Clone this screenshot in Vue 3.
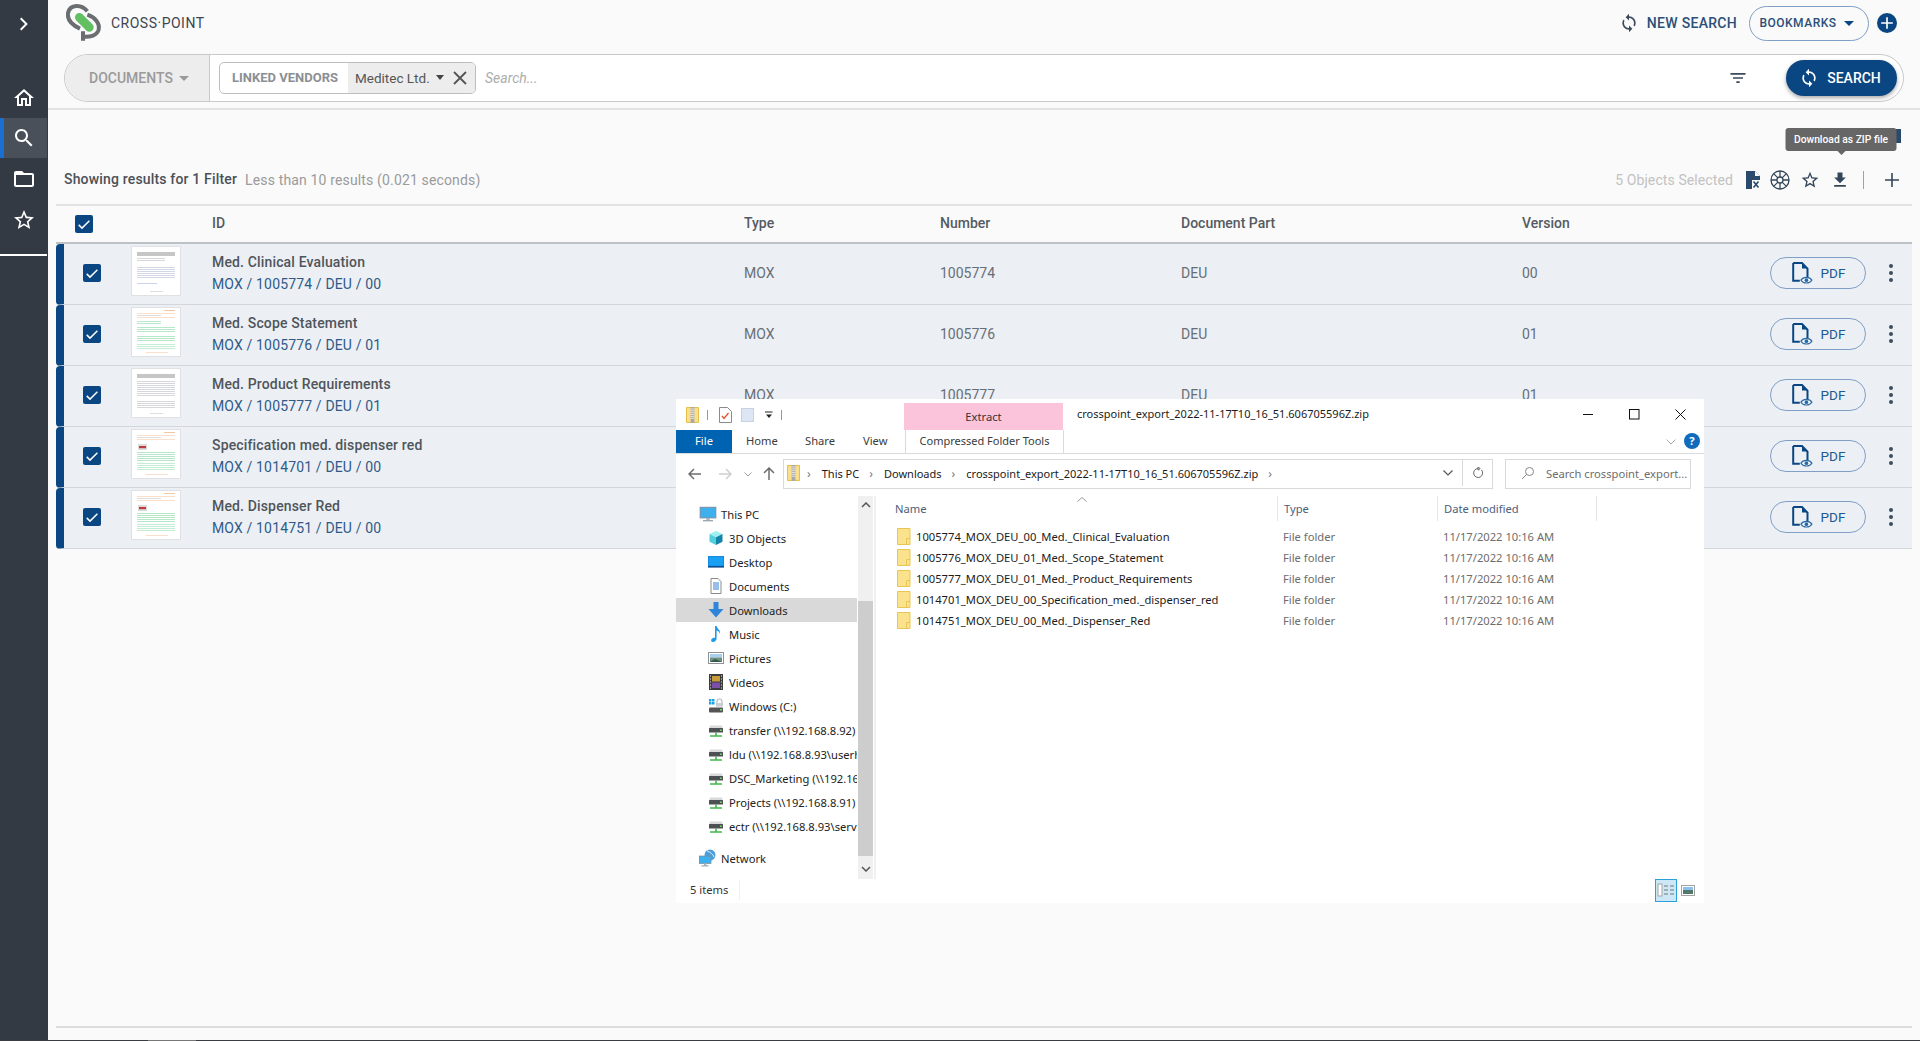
<template>
  <div class="app">
    <!-- shared icons -->
    <svg class="defs">
      <symbol id="i-sync" viewBox="0 0 24 24"><path d="M12 4V1L8 5l4 4V6c3.31 0 6 2.69 6 6 0 1.01-.25 1.97-.7 2.8l1.46 1.46C19.54 15.03 20 13.57 20 12c0-4.42-3.58-8-8-8zm0 14c-3.31 0-6-2.69-6-6 0-1.01.25-1.97.7-2.8L5.24 7.74C4.46 8.97 4 10.43 4 12c0 4.42 3.58 8 8 8v3l4-4-4-4v3z" /></symbol>
      <symbol id="i-check" viewBox="0 0 24 24"><path d="M9 16.6L4.9 12.5l-1.6 1.6L9 19.8 20.9 7.9l-1.6-1.6z" /></symbol>
      <symbol id="i-star" viewBox="0 0 24 24"><path d="M22 9.24l-7.19-.62L12 2 9.19 8.63 2 9.24l5.46 4.73L5.82 21 12 17.27 18.18 21l-1.63-7.03L22 9.24zM12 15.4l-3.76 2.27 1-4.28-3.32-2.88 4.38-.38L12 6.1l1.71 4.04 4.38.38-3.32 2.88 1 4.28L12 15.4z" /></symbol>
      <symbol id="n-pc" viewBox="0 0 16 16"><rect x="1" y="2" width="14" height="9.5" fill="#3fb0ee" stroke="#7d8a94" stroke-width=".8" /><rect x="6.5" y="11.5" width="3" height="2" fill="#aab4bc" /><rect x="3.5" y="13.5" width="9" height="1" fill="#8b969f" /></symbol>
      <symbol id="n-cube" viewBox="0 0 16 16"><path d="M8 1l6.5 3L8 7.2 1.5 4z" fill="#9ff0f2" /><path d="M1.5 4L8 7.2V15l-6.5-3.2z" fill="#4fd0dc" /><path d="M14.5 4L8 7.2V15l6.5-3.2z" fill="#1483a8" /></symbol>
      <symbol id="n-desktop" viewBox="0 0 16 16"><rect x="0" y="2" width="16" height="11" fill="#1787e0" /><rect x="0" y="12" width="16" height="1.6" fill="#0a4f8f" /><rect x="1" y="3" width="14" height="8.6" fill="#18a0f3" /></symbol>
      <symbol id="n-docs" viewBox="0 0 16 16"><path d="M3 .5h7l3 3v12H3z" fill="#fff" stroke="#8a8a8a" /><path d="M5 5h6M5 7h6M5 9h6M5 11h6" stroke="#2f7fcf" /></symbol>
      <symbol id="n-down" viewBox="0 0 16 16"><path d="M5.5 0h5v7h5L8 15.5.5 7h5z" fill="#2f86d9" /></symbol>
      <symbol id="n-music" viewBox="0 0 16 16"><path d="M7 0h1.6c.3 3 4.4 3.4 3.2 8-.4-2-1.6-3-3.2-3.4V12.5C8.6 14.6 6.7 16 5 16c-1.6 0-2.3-1.2-1.7-2.5.7-1.4 2.3-2 3.7-1.7z" fill="#1f9be8" /></symbol>
      <symbol id="n-pics" viewBox="0 0 16 16"><rect x=".5" y="2.5" width="15" height="11" fill="#fff" stroke="#8f9296" /><rect x="2" y="4" width="12" height="3.5" fill="#a9d0ee" /><rect x="2" y="7.5" width="12" height="4.5" fill="#6f8f80" /><path d="M2 12l5-3 7 3z" fill="#2f5a4d" /></symbol>
      <symbol id="n-video" viewBox="0 0 16 16"><rect x="1" y="0" width="14" height="16" fill="#3b3b3b" /><rect x="4" y="2" width="8" height="5.5" fill="#c79a3a" /><rect x="4" y="8.5" width="8" height="5.5" fill="#7c4fa8" /><path d="M2 2h1M2 5h1M2 8h1M2 11h1M2 14h1M13 2h1M13 5h1M13 8h1M13 11h1M13 14h1" stroke="#eee" /></symbol>
      <symbol id="n-cdrive" viewBox="0 0 16 16"><rect x="1" y="9.5" width="14" height="5" rx="1" fill="#555" /><rect x="12" y="11" width="2" height="1.5" fill="#6fdc6f" /><path d="M1 1h2.5v2.5H1zM4 1h2.5v2.5H4zM1 4h2.5v2.5H1zM4 4h2.5v2.5H4z" fill="#1fa0ea" /><path d="M9 7V3.5a2.5 2.5 0 0 1 5 0V5" fill="none" stroke="#b9bec2" stroke-width="1.2" /><rect x="8" y="5" width="7" height="3.6" fill="#c9ced2" /></symbol>
      <symbol id="n-net" viewBox="0 0 16 16"><path d="M2 3.5h12L15 7H1z" fill="#d7d9db" /><rect x="1" y="6" width="14" height="4.5" rx=".6" fill="#4d4f52" /><rect x="12" y="7.5" width="1.8" height="1.4" fill="#6fdc6f" /><path d="M8 10.5v3M2 14h12" stroke="#43b649" stroke-width="1.6" /></symbol>
      <symbol id="n-network" viewBox="0 0 18 18"><circle cx="11" cy="6" r="5.5" fill="#4c9fdf" /><path d="M8 2c3 1 6 3 7 6" stroke="#cfeafc" fill="none" /><rect x="0" y="7" width="12" height="7.5" fill="#3fb0ee" stroke="#7d8a94" stroke-width=".7" /><rect x="5" y="14.5" width="2.4" height="2" fill="#aab4bc" /><rect x="2.5" y="16.4" width="7" height="1" fill="#8b969f" /></symbol>
      <symbol id="i-zip" viewBox="0 0 14 17"><path d="M.5 .5h13v16H.5z" fill="#fbdf8a" stroke="#e2b93b" /><rect x="5" y="0" width="4" height="17" fill="#a8a8a8" /><path d="M5 2h4M5 4h4M5 6h4M5 8h4M5 10h4M5 12h4" stroke="#e8e8e8" /></symbol>
    </svg>

    <nav class="sidebar">
      <div class="side-item side-toggle">
        <svg viewBox="0 0 24 24" width="24" height="24"><path d="M9.4 5.6L8 7l5 5-5 5 1.4 1.4 6.4-6.4z" fill="#fff" /></svg>
      </div>
      <div class="side-item">
        <svg viewBox="0 0 24 24" width="24" height="24"><path d="M12 5.69l5 4.5V18h-2v-6H9v6H7v-7.81l5-4.5M12 3L2 12h3v8h6v-6h2v6h6v-8h3L12 3z" fill="#fff" /></svg>
      </div>
      <div class="side-item active">
        <svg viewBox="0 0 24 24" width="24" height="24"><path d="M15.5 14h-.79l-.28-.27C15.41 12.59 16 11.11 16 9.5 16 5.91 13.09 3 9.5 3S3 5.91 3 9.5 5.91 16 9.5 16c1.61 0 3.09-.59 4.23-1.57l.27.28v.79l5 4.99L20.49 19l-4.99-5zm-6 0C7.01 14 5 11.99 5 9.5S7.01 5 9.5 5 14 7.01 14 9.5 11.99 14 9.5 14z" fill="#fff" /></svg>
      </div>
      <div class="side-item side-folder">
        <svg viewBox="0 0 24 24" width="24" height="24"><path d="M20 6h-8l-2-2H4c-1.1 0-1.99.9-1.99 2L2 18c0 1.1.9 2 2 2h16c1.1 0 2-.9 2-2V8c0-1.1-.9-2-2-2zm0 12H4V8h16v10z" fill="#fff" /></svg>
      </div>
      <div class="side-item side-star">
        <svg width="24" height="24" fill="#fff"><use href="#i-star" /></svg>
      </div>
      <div class="side-rule"></div>
    </nav>

    <main class="main">
      <header class="topbar">
        <svg class="logo" viewBox="48 12 108 126" width="36" height="42">
          <path d="M88 58L118 88" stroke="#62bf62" stroke-width="26" stroke-linecap="round" />
          <path d="M112 40C95 18 60 18 54 45C50 70 75 85 90 92" fill="none" stroke="#6a6e70" stroke-width="12" />
          <path d="M112 50C135 58 150 75 146 95C142 112 120 118 99 116M99 100V128" fill="none" stroke="#6a6e70" stroke-width="12" />
        </svg>
        <span class="brand">CROSS·POINT</span>
        <div class="top-actions">
          <svg class="new-icon" width="20" height="20" fill="#3b4a5a"><use href="#i-sync" /></svg>
          <span class="new-search">NEW SEARCH</span>
          <button class="bookmarks">BOOKMARKS<span class="caret navy"></span></button>
          <span class="plus-circle">
            <svg viewBox="0 0 24 24" width="20" height="20"><path d="M11 5h2v6h6v2h-6v6h-2v-6H5v-2h6z" fill="#fff" /></svg>
          </span>
        </div>
      </header>

      <div class="searchbar">
        <div class="doc-select">DOCUMENTS<span class="caret grey"></span></div>
        <div class="chip">
          <span class="chip-label">LINKED VENDORS</span>
          <span class="chip-value">
            Meditec Ltd.<span class="caret dark"></span>
            <svg viewBox="0 0 16 16" width="16" height="16"><path d="M2 2l12 12M14 2L2 14" stroke="#555" stroke-width="1.8" /></svg>
          </span>
        </div>
        <span class="placeholder">Search...</span>
        <svg class="filter-icon" viewBox="0 0 24 24" width="20" height="20"><path d="M10 18h4v-2h-4v2zM3 6v2h18V6H3zm3 7h12v-2H6v2z" fill="#3b4a5a" /></svg>
        <button class="search-btn">
          <svg width="20" height="20" fill="#fff"><use href="#i-sync" /></svg>
          SEARCH
        </button>
      </div>
      <div class="bar-rule"></div>

      <div class="view-toggle">
        <svg viewBox="0 0 10 14" width="10" height="14"><path d="M0 2h9M0 6h9M0 10h9" stroke="#777" stroke-width="1.6" /></svg>
        <span class="view-on"></span>
      </div>

      <div class="results">
        <span class="res-title">Showing results for 1 Filter</span>
        <span class="res-meta">Less than 10 results (0.021 seconds)</span>
        <span class="res-selected">5 Objects Selected</span>
        <span class="tool tool-doc">
          <svg viewBox="0 0 15 18" width="15" height="18"><path d="M0 0h9l5 5v13H0z" fill="#2a4a6b" /><path d="M9 0v5h5z" fill="#fafafa" /><rect x="6" y="9" width="9" height="9" fill="#fafafa" /><path d="M7.5 10.5l5 6M12.5 10.5l-5 6" stroke="#2a4a6b" stroke-width="1.6" /></svg>
        </span>
        <span class="tool">
          <svg viewBox="0 0 20 20" width="20" height="20" fill="none" stroke="#34465a" stroke-width="1.3"><circle cx="10" cy="10" r="9" /><circle cx="10" cy="10" r="3" /><path d="M10 1v6M10 13v6M1 10h6M13 10h6M3.6 3.6l4.3 4.3M12.1 12.1l4.3 4.3M16.4 3.6l-4.3 4.3M7.9 12.1l-4.3 4.3" /></svg>
        </span>
        <span class="tool">
          <svg width="20" height="20" fill="#34465a"><use href="#i-star" /></svg>
        </span>
        <span class="tool tool-tip">
          <svg viewBox="0 0 24 24" width="20" height="20"><path d="M19 9h-4V3H9v6H5l7 7 7-7zM5 18v2h14v-2H5z" fill="#34465a" /></svg>
          <span class="tooltip">Download as ZIP file</span>
        </span>
        <span class="tool-sep"></span>
        <span class="tool tool-plus">
          <svg viewBox="0 0 16 16" width="16" height="16"><path d="M8 1v14M1 8h14" stroke="#34465a" stroke-width="1.6" /></svg>
        </span>
      </div>

      <section class="table">
        <div class="grid-row head">
          <span class="cb cb-head">
            <svg width="16" height="16" fill="#fff"><use href="#i-check" /></svg>
          </span>
          <span></span>
          <span>ID</span>
          <span>Type</span>
          <span>Number</span>
          <span>Document Part</span>
          <span>Version</span>
        </div>
        <div v-for="doc in docs" :key="doc.number" class="grid-row row">
          <span class="cb">
            <svg width="16" height="16" fill="#fff"><use href="#i-check" /></svg>
          </span>
          <span class="thumb">
            <svg viewBox="0 0 48 48" width="48" height="48">
              <rect v-for="(l, i) in thumbs[doc.thumb]" :key="i" :x="l[0]" :y="l[1]" :width="l[2]" :height="l[3]" :fill="l[4]" />
            </svg>
          </span>
          <div class="id-cell">
            <div class="doc-name">{{ doc.name }}</div>
            <div class="doc-path">MOX / {{ doc.number }} / DEU / {{ doc.version }}</div>
          </div>
          <span>MOX</span>
          <span>{{ doc.number }}</span>
          <span>DEU</span>
          <span>{{ doc.version }}</span>
          <div class="row-actions">
            <button class="pdf-btn">
              <svg viewBox="0 0 20 20" width="22" height="22">
                <path d="M2 1h8l5 5v8M2 1v16h6" fill="none" stroke="#0a4682" stroke-width="1.8" />
                <path d="M10 1v5h5z" fill="#0a4682" />
                <path d="M9 16.5c2-3.4 8-3.4 10 0-2 3.4-8 3.4-10 0z" fill="#fff" stroke="#2b6aa5" stroke-width="1" />
                <circle cx="14" cy="16.5" r="1.7" fill="#2b6aa5" />
              </svg>
              PDF
            </button>
            <span class="dots"><i></i><i></i><i></i></span>
          </div>
        </div>
      </section>

      <div class="footer-line"></div>
    </main>

    <!-- explorer window on top of the page -->
    <div class="win">
      <div class="win-title">
        <svg class="qa-zip" width="13" height="16"><use href="#i-zip" /></svg>
        <span class="qa-sep"></span>
        <svg class="qa-doc" viewBox="0 0 13 16" width="13" height="16"><path d="M.5 .5h8l4 4v11H.5z" fill="#fff" stroke="#8a8a8a" /><path d="M3 9l2 2.5L9.5 6" fill="none" stroke="#e2542a" stroke-width="1.3" /></svg>
        <svg class="qa-blank" viewBox="0 0 13 14" width="13" height="14"><rect x=".5" y=".5" width="12" height="13" fill="#dce6f4" stroke="#c6d2e4" /></svg>
        <svg class="qa-drop" viewBox="0 0 8 8" width="8" height="8"><path d="M0 1h7.5" stroke="#222" /><path d="M1 3.5h6L4 7z" fill="#222" /></svg>
        <span class="qa-sep qa-sep2"></span>
        <div class="extract">Extract</div>
        <span class="win-name">crosspoint_export_2022-11-17T10_16_51.606705596Z.zip</span>
        <svg class="win-ctl ctl-min" viewBox="0 0 11 11" width="11" height="11"><path d="M0 5.5h10" stroke="#111" /></svg>
        <svg class="win-ctl ctl-max" viewBox="0 0 11 11" width="11" height="11"><rect x=".5" y=".5" width="9.5" height="9.5" fill="none" stroke="#111" /></svg>
        <svg class="win-ctl ctl-close" viewBox="0 0 11 11" width="11" height="11"><path d="M.5 .5l10 10M10.5 .5l-10 10" stroke="#111" /></svg>
      </div>

      <div class="win-tabs">
        <span class="tab-file">File</span>
        <span class="tab tab-home">Home</span>
        <span class="tab tab-share">Share</span>
        <span class="tab tab-view">View</span>
        <span class="tab-tools">Compressed Folder Tools</span>
        <svg class="ribbon-chev" viewBox="0 0 10 6" width="10" height="6"><path d="M.5 .5L5 5 9.5 .5" fill="none" stroke="#aaa" /></svg>
        <span class="help">?</span>
      </div>

      <div class="win-address">
        <svg class="nav-arrow a-back" viewBox="0 0 14 12" width="14" height="12"><path d="M1 6h12M6 1L1 6l5 5" fill="none" stroke="#6d6d6d" stroke-width="1.5" /></svg>
        <svg class="nav-arrow a-fwd" viewBox="0 0 14 12" width="14" height="12"><path d="M13 6H1M8 1l5 5-5 5" fill="none" stroke="#cfcfcf" stroke-width="1.5" /></svg>
        <svg class="nav-arrow a-drop" viewBox="0 0 8 5" width="8" height="5"><path d="M.5 .5L4 4 7.5 .5" fill="none" stroke="#999" /></svg>
        <svg class="nav-arrow a-up" viewBox="0 0 12 14" width="12" height="14"><path d="M6 13V1M1 6l5-5 5 5" fill="none" stroke="#6d6d6d" stroke-width="1.5" /></svg>
        <div class="addr-box">
          <svg class="addr-zip" width="13" height="16"><use href="#i-zip" /></svg>
          <span class="crumb-sep">›</span><span>This PC</span>
          <span class="crumb-sep">›</span><span>Downloads</span>
          <span class="crumb-sep">›</span><span>crosspoint_export_2022-11-17T10_16_51.606705596Z.zip</span>
          <span class="crumb-sep">›</span>
          <svg class="addr-drop" viewBox="0 0 10 6" width="10" height="6"><path d="M.5 .5L5 5 9.5 .5" fill="none" stroke="#555" stroke-width="1.2" /></svg>
          <span class="addr-refresh">
            <svg viewBox="0 0 12 12" width="12" height="12"><path d="M9.5 3A4.5 4.5 0 1 1 6 1.5M6 0v3.2L8.2 1.6z" fill="none" stroke="#666" /></svg>
          </span>
        </div>
        <div class="win-search">
          <svg viewBox="0 0 14 14" width="14" height="14"><circle cx="8.5" cy="5.5" r="4" fill="none" stroke="#888" /><path d="M5.5 8.5L1 13" stroke="#888" /></svg>
          <span>Search crosspoint_export...</span>
        </div>
      </div>

      <div class="win-body">
        <aside class="win-nav">
          <div class="nav-list">
            <div v-for="item in navItems" :key="item.label" class="nav-row" :class="[item.cls, { hover: item.label === 'Downloads' }]">
              <svg :width="item.cls ? 18 : 16" :height="item.cls ? 18 : 16"><use :href="'#' + item.icon" /></svg>
              <span class="nav-label">{{ item.label }}</span>
            </div>
          </div>
          <div class="nav-scroll">
            <svg viewBox="0 0 10 6" width="10" height="6"><path d="M1 5l4-4 4 4" fill="none" stroke="#555" stroke-width="1.5" /></svg>
            <div class="nav-thumb"></div>
            <svg viewBox="0 0 10 6" width="10" height="6"><path d="M1 1l4 4 4-4" fill="none" stroke="#555" stroke-width="1.5" /></svg>
          </div>
        </aside>

        <div class="win-files">
          <svg class="sort-caret" viewBox="0 0 10 5" width="10" height="5"><path d="M.5 4.5L5 .5l4.5 4" fill="none" stroke="#999" /></svg>
          <div class="file-head">
            <span>Name</span>
            <span>Type</span>
            <span>Date modified</span>
          </div>
          <div v-for="f in files" :key="f" class="file-row">
            <span class="file-name">
              <svg viewBox="0 0 14 17" width="14" height="17"><path d="M.5 .5h12.5v16H.5z" fill="#fbe38e" stroke="#e8c555" /><path d="M9.5 16.5v-6h3.5" fill="none" stroke="#e8c555" /></svg>
              {{ f }}
            </span>
            <span class="file-type">File folder</span>
            <span class="file-type">11/17/2022 10:16 AM</span>
          </div>
        </div>
      </div>

      <div class="win-status">
        <span class="status-count">5 items</span>
        <span class="status-view on">
          <svg viewBox="0 0 18 14" width="18" height="14"><rect x="1" y="1" width="4" height="12" fill="#fff" stroke="#a3a3a3" /><path d="M7 3h4M13 3h4M7 7h4M13 7h4M7 11h4M13 11h4" stroke="#777" /></svg>
        </span>
        <span class="status-view">
          <svg viewBox="0 0 14 11" width="14" height="11"><rect x=".5" y=".5" width="13" height="10" fill="#fff" stroke="#a3a3a3" /><rect x="2" y="2" width="10" height="3" fill="#8ec0ef" /><rect x="2" y="5" width="10" height="4" fill="#4f7a6a" /></svg>
        </span>
      </div>
    </div>

    <div class="taskline"><span></span></div>
  </div>
</template>

<script setup>
const docs = [
  { name: "Med. Clinical Evaluation", number: "1005774", version: "00", thumb: "grey" },
  { name: "Med. Scope Statement", number: "1005776", version: "01", thumb: "green" },
  { name: "Med. Product Requirements", number: "1005777", version: "01", thumb: "grey2" },
  { name: "Specification med. dispenser red", number: "1014701", version: "00", thumb: "red" },
  { name: "Med. Dispenser Red", number: "1014751", version: "00", thumb: "red" },
];

// little fake pages for the previews: x, y, w, h, colour
const lines = (ys, colour, x = 5, w = 38) => ys.map((y) => [x, y, w, 0.7, colour]);
const orangeHead = [
  [32, 2, 11, 1, "#f3c4a0"],
  [5, 5, 38, 0.7, "#f6d2b6"],
  [5, 7, 24, 0.7, "#cfcfcf"],
  [5, 9, 38, 0.7, "#f6d2b6"],
];
const thumbs = {
  grey: [
    [5, 5, 38, 4, "#c6c6c6"],
    ...lines([11, 13], "#c4c4ce", 5, 28),
    ...lines([20, 22, 24, 26, 28, 30], "#c0c5d8"),
    ...lines([36], "#b6c2e6", 5, 20),
    [18, 44, 13, 0.7, "#cfcfcf"],
  ],
  grey2: [
    [5, 5, 38, 4, "#c6c6c6"],
    ...lines([12, 14, 16, 18, 20, 22, 24, 26], "#c4c4ce"),
    ...lines([32, 34, 36, 38], "#c6c6ca"),
    [18, 44, 13, 0.7, "#cfcfcf"],
  ],
  green: [
    ...orangeHead,
    ...lines([13, 15], "#9fdfb8", 5, 24),
    ...lines([19, 21, 23], "#98dcb2"),
    ...lines([28, 30, 32], "#98dcb2"),
    ...lines([36, 38, 40], "#ace4c2"),
    [14, 44, 22, 0.7, "#f6d2b6"],
  ],
  red: [
    ...orangeHead,
    [6, 14, 9, 6, "#dcdcdc"],
    [7, 16, 7, 2.2, "#c43a3a"],
    ...lines([22, 24, 26, 28, 30], "#98dcb2"),
    ...lines([33, 35, 37, 39], "#ace4c2"),
    [14, 44, 22, 0.7, "#f6d2b6"],
  ],
};

const navItems = [
  { label: "This PC", icon: "n-pc", cls: "top" },
  { label: "3D Objects", icon: "n-cube" },
  { label: "Desktop", icon: "n-desktop" },
  { label: "Documents", icon: "n-docs" },
  { label: "Downloads", icon: "n-down" },
  { label: "Music", icon: "n-music" },
  { label: "Pictures", icon: "n-pics" },
  { label: "Videos", icon: "n-video" },
  { label: "Windows (C:)", icon: "n-cdrive" },
  { label: "transfer (\\\\192.168.8.92)", icon: "n-net" },
  { label: "ldu (\\\\192.168.8.93\\userhome", icon: "n-net" },
  { label: "DSC_Marketing (\\\\192.168", icon: "n-net" },
  { label: "Projects (\\\\192.168.8.91)", icon: "n-net" },
  { label: "ectr (\\\\192.168.8.93\\service", icon: "n-net" },
  { label: "Network", icon: "n-network", cls: "top net" },
];

const files = [
  "1005774_MOX_DEU_00_Med._Clinical_Evaluation",
  "1005776_MOX_DEU_01_Med._Scope_Statement",
  "1005777_MOX_DEU_01_Med._Product_Requirements",
  "1014701_MOX_DEU_00_Specification_med._dispenser_red",
  "1014751_MOX_DEU_00_Med._Dispenser_Red",
];
</script>

<style>
html,
body {
  margin: 0;
  background: #fafafa;
}
</style>

<style scoped>
.app {
  position: relative;
  display: flex;
  height: 1041px;
  overflow: hidden;
  background: #fafafa;
  font-family: Roboto, "Liberation Sans", sans-serif;
  font-size: 14px;
  color: #4b5158;
}
.defs {
  display: none;
}

/* sidebar */
.sidebar {
  width: 48px;
  height: 1040px;
  flex: none;
  background: #343a43;
  display: flex;
  flex-direction: column;
}
.side-item {
  height: 40px;
  display: flex;
  align-items: center;
  justify-content: center;
  box-sizing: border-box;
  width: 47px;
}
.side-toggle {
  height: 48px;
  margin-bottom: 30px;
  padding-left: 1px;
}
.side-item.active {
  background: #4a505a;
  border-left: 4px solid #1a6fd0;
  padding-right: 4px;
}
.side-folder {
  padding-top: 2px;
}
.side-star {
  padding-top: 4px;
}
.side-rule {
  height: 2px;
  width: 47px;
  background: #fff;
  margin-top: 16px;
}

.main {
  flex: 1;
  min-width: 0;
  display: flex;
  flex-direction: column;
  height: 1040px;
}

/* top bar */
.topbar {
  height: 54px;
  display: flex;
  align-items: center;
  padding: 0 23px 0 18px;
  box-sizing: border-box;
}
.logo {
  margin-right: 9px;
  margin-top: -8px;
}
.brand {
  font-size: 14px;
  letter-spacing: 0.5px;
  color: #3d4650;
  margin-top: -8px;
}
.top-actions {
  margin-left: auto;
  display: flex;
  align-items: center;
  margin-top: -8px;
}
.new-icon {
  margin-right: 8px;
}
.new-search {
  font-size: 14px;
  font-weight: 500;
  letter-spacing: 0.3px;
  color: #2b4f78;
  margin-right: 12px;
}
.bookmarks {
  width: 120px;
  height: 35px;
  box-sizing: border-box;
  border: 1px solid #7f9fc6;
  border-radius: 18px;
  background: #fafafa;
  font: 500 12px Roboto, sans-serif;
  letter-spacing: 0.5px;
  color: #2b4f78;
  padding: 0 5px 0 0;
  display: flex;
  align-items: center;
  justify-content: center;
}
.caret {
  display: inline-block;
  width: 0;
  height: 0;
  border-left: 5px solid transparent;
  border-right: 5px solid transparent;
  border-top: 5px solid #0a4682;
  margin-left: 7px;
}
.caret.grey {
  border-top-color: #9a9a9a;
  margin-left: 6px;
}
.caret.dark {
  border-left-width: 4px;
  border-right-width: 4px;
  border-top-color: #444;
  margin-left: 6px;
  margin-right: 8px;
}
.plus-circle {
  width: 20px;
  height: 20px;
  margin-left: 8px;
  border-radius: 50%;
  background: #0a4682;
  display: flex;
}

/* search bar */
.searchbar {
  height: 48px;
  margin: 0 16px;
  box-sizing: border-box;
  border: 1.5px solid #c9c9c9;
  border-radius: 24px;
  background: #fff;
  display: flex;
  align-items: center;
  overflow: hidden;
}
.doc-select {
  width: 145px;
  height: 100%;
  flex: none;
  box-sizing: border-box;
  background: #ededed;
  border-right: 1.5px solid #c9c9c9;
  color: #9a9a9a;
  font-weight: 500;
  display: flex;
  align-items: center;
  padding-left: 24px;
}
.chip {
  margin-left: 9px;
  height: 32px;
  width: 257px;
  box-sizing: border-box;
  border: 1px solid #bdbdbd;
  border-radius: 5px;
  overflow: hidden;
  display: flex;
  align-items: center;
}
.chip-label {
  font-size: 13px;
  font-weight: 700;
  color: #8b8f94;
  width: 128px;
  padding: 0 0 2px 12px;
  box-sizing: border-box;
}
.chip-value {
  flex: 1;
  height: 100%;
  background: #ededed;
  display: flex;
  align-items: center;
  padding: 0 0 1px 7px;
  box-sizing: border-box;
  color: #555;
  font-size: 13.5px;
}
.placeholder {
  margin-left: 9px;
  font-style: italic;
  color: #adadad;
}
.filter-icon {
  margin-left: auto;
  margin-right: 38px;
}
.search-btn {
  width: 111px;
  height: 36px;
  margin-right: 6px;
  border: none;
  border-radius: 18px;
  background: #0a4682;
  color: #fff;
  font: 500 14px Roboto, sans-serif;
  display: flex;
  align-items: center;
  justify-content: center;
  gap: 8px;
  padding: 0 3px 0 0;
  box-sizing: border-box;
  box-shadow: 0 2px 4px rgba(0, 0, 0, 0.35);
}
.bar-rule {
  height: 2px;
  margin-top: 6px;
  background: #e3e3e3;
}

/* results toolbar */
.view-toggle {
  margin-top: 19px;
  height: 14px;
  display: flex;
  justify-content: flex-end;
  padding-right: 19px;
  gap: 1px;
}
.view-on {
  width: 8px;
  background: #2a4a6b;
}
.results {
  margin-top: 25px;
  height: 24px;
  margin-bottom: 12px;
  padding: 0 7px 0 16px;
  display: flex;
  align-items: center;
}
.res-title {
  font-weight: 500;
  letter-spacing: 0.17px;
  padding-bottom: 2px;
  color: #4b5158;
}
.res-meta {
  margin-left: 8px;
  letter-spacing: 0.15px;
  padding-bottom: 1px;
  color: #9b9b9b;
}
.res-selected {
  margin-left: auto;
  margin-right: 8px;
  letter-spacing: 0.1px;
  padding-bottom: 1px;
  color: #c2c2c2;
}
.tool {
  width: 30px;
  height: 24px;
  display: flex;
  align-items: center;
  justify-content: center;
  position: relative;
}
.tool-doc {
  width: 24px;
}
.tool-sep {
  width: 16px;
  height: 18px;
  background: linear-gradient(#9aa3ad, #9aa3ad) center / 1px 100% no-repeat;
}
.tool-plus {
  width: 42px;
}
.tooltip {
  position: absolute;
  bottom: 41px;
  left: 50%;
  transform: translateX(-50%);
  margin-left: 1px;
  width: 111px;
  height: 23px;
  box-sizing: border-box;
  background: #666;
  border-radius: 3px;
  color: #fff;
  font-size: 10.3px;
  font-weight: 500;
  line-height: 23px;
  text-align: center;
  white-space: nowrap;
}
.tooltip::after {
  content: "";
  position: absolute;
  top: 100%;
  left: 50%;
  margin-left: -4px;
  border-left: 4px solid transparent;
  border-right: 4px solid transparent;
  border-top: 4px solid #666;
}

/* table */
.table {
  margin: 0 8px;
  border-top: 2px solid #e3e3e3;
}
.grid-row {
  display: grid;
  grid-template-columns: 76px 80px 532px 196px 241px 341px 248px 1fr;
  align-items: center;
}
.head {
  height: 38px;
  padding-bottom: 3px;
  box-sizing: border-box;
  border-bottom: 2px solid #bcc1c6;
  font-weight: 500;
  color: #555b62;
}
.row {
  height: 61px;
  box-sizing: border-box;
  background: #ecf0f5;
  border-left: 8px solid #0a4682;
  border-bottom: 1px solid #d3d6da;
  border-radius: 4px 0 0 4px;
  padding-bottom: 3px;
  grid-template-columns: 68px 80px 532px 196px 241px 341px 248px 1fr;
  color: #686e75;
}
.cb {
  width: 18px;
  height: 18px;
  margin-left: 19px;
  border-radius: 2px;
  background: #0a4682;
  display: flex;
  align-items: center;
  justify-content: center;
}
.row .cb {
  margin-top: 1px;
}
.cb-head {
  margin-top: 2px;
}
.thumb {
  width: 48px;
  height: 48px;
  margin-bottom: 3px;
  background: #fff;
  outline: 1px solid #dfe1e4;
  display: block;
}
.thumb svg {
  display: block;
  filter: blur(0.3px);
}
.doc-name {
  line-height: 22px;
  font-weight: 500;
  letter-spacing: 0.15px;
  color: #50555b;
}
.doc-path {
  line-height: 22px;
  color: #2f5a88;
  letter-spacing: 0.15px;
}
.row-actions {
  display: flex;
  align-items: center;
  margin-top: 1px;
}
.pdf-btn {
  width: 96px;
  height: 32px;
  padding: 0;
  border: 1px solid #7f9fc6;
  border-radius: 16px;
  background: transparent;
  color: #1d5a94;
  font: 400 13.5px Roboto, sans-serif;
  display: flex;
  align-items: center;
  justify-content: center;
  gap: 8px;
}
.dots {
  margin-left: 23px;
  display: flex;
  flex-direction: column;
  gap: 3px;
}
.dots i {
  width: 4px;
  height: 4px;
  border-radius: 50%;
  background: #3d4c5e;
}
.footer-line {
  margin: auto 8px 12px;
  height: 2px;
  background: #dcdcdc;
}
.taskline {
  position: absolute;
  left: 0;
  right: 0;
  bottom: 0;
  height: 1px;
  background: #3a3d42;
}
.taskline span {
  display: block;
  margin-left: 148px;
  width: 48px;
  height: 1px;
  background: #777;
}

/* explorer window */
.win {
  position: absolute;
  left: 676px;
  top: 399px;
  width: 1028px;
  height: 504px;
  background: #fff;
  display: flex;
  flex-direction: column;
  font-family: "Noto Sans", "Open Sans", sans-serif;
  font-size: 11.2px;
  color: #1b1b1b;
}
.win-title {
  height: 31px;
  flex: none;
  display: flex;
  align-items: center;
}
.qa-zip {
  margin-left: 10px;
}
.qa-sep {
  width: 1px;
  height: 10px;
  background: #999;
  margin-left: 8px;
}
.qa-doc {
  margin-left: 11px;
}
.qa-blank {
  margin-left: 9px;
}
.qa-drop {
  margin-left: 11px;
}
.qa-sep2 {
  margin-left: 8px;
}
.extract {
  margin-left: 122px;
  width: 159px;
  height: 27px;
  align-self: flex-end;
  background: #fcc4da;
  color: #333;
  text-align: center;
  line-height: 27px;
}
.win-name {
  margin-left: 14px;
  margin-top: -2px;
  font-size: 11px;
}
.win-ctl {
  flex: none;
}
.ctl-min {
  margin-left: auto;
}
.ctl-max {
  margin-left: 35px;
}
.ctl-close {
  margin-left: 35px;
  margin-right: 18px;
}
.win-tabs {
  height: 24px;
  flex: none;
  display: flex;
  align-items: center;
  border-bottom: 1px solid #dadbdc;
  box-sizing: border-box;
  color: #3b3b3b;
}
.tab-file {
  width: 56px;
  height: 23px;
  background: #0063b1;
  color: #fff;
  text-align: center;
  line-height: 21px;
}
.tab {
  line-height: 21px;
  height: 23px;
}
.tab-home {
  margin-left: 14px;
  width: 59px;
}
.tab-share {
  width: 58px;
}
.tab-view {
  width: 42px;
}
.tab-tools {
  width: 159px;
  height: 23px;
  line-height: 21px;
  font-size: 11px;
  text-align: center;
  box-sizing: border-box;
  border-left: 1px solid #dadbdc;
  border-right: 1px solid #dadbdc;
}
.ribbon-chev {
  margin-left: auto;
}
.help {
  width: 16px;
  height: 16px;
  margin: 0 4px 2px 8px;
  border-radius: 50%;
  background: #0f6cbd;
  color: #fff;
  font-weight: 700;
  line-height: 16px;
  text-align: center;
}
.win-address {
  height: 30px;
  flex: none;
  margin-top: 5px;
  display: flex;
  align-items: center;
}
.a-back {
  margin-left: 12px;
}
.a-fwd {
  margin-left: 16px;
}
.a-drop {
  margin-left: 12px;
}
.a-up {
  margin-left: 11px;
}
.addr-box {
  margin-left: 8px;
  width: 710px;
  height: 30px;
  box-sizing: border-box;
  border: 1px solid #d9d9d9;
  display: flex;
  align-items: center;
  padding: 0 0 2px 3px;
  font-size: 11px;
}
.addr-zip {
  margin-right: -3px;
}
.crumb-sep {
  color: #777;
  margin: 0 11px 0 10px;
  font-size: 12px;
}
.addr-drop {
  margin-left: auto;
  margin-right: 9px;
}
.addr-refresh {
  width: 30px;
  height: 100%;
  box-sizing: border-box;
  border-left: 1px solid #d9d9d9;
  display: flex;
  align-items: center;
  justify-content: center;
}
.win-search {
  margin-left: 12px;
  width: 186px;
  height: 30px;
  box-sizing: border-box;
  border: 1px solid #d9d9d9;
  display: flex;
  align-items: center;
  padding: 0 0 2px 15px;
  gap: 11px;
  color: #6d6d6d;
  white-space: nowrap;
}
.win-body {
  flex: 1;
  min-height: 0;
  display: flex;
  margin-top: 7px;
}
.win-nav {
  width: 198px;
  flex: none;
  display: flex;
  border-right: 2px solid #f0f0f0;
}
.nav-list {
  width: 181px;
  flex: none;
  padding-top: 6px;
  overflow: hidden;
}
.nav-row {
  height: 24px;
  display: flex;
  align-items: center;
  padding-left: 32px;
  gap: 5px;
  white-space: nowrap;
  color: #222;
}
.nav-row svg {
  flex: none;
}
.nav-row.top {
  padding-left: 23px;
  gap: 4px;
}
.nav-row.net {
  margin-top: 8px;
}
.nav-row.hover {
  background: #d9d9d9;
}
.nav-scroll {
  width: 15px;
  margin-left: 1px;
  background: #f0f0f0;
  display: flex;
  flex-direction: column;
  align-items: center;
  padding-top: 6px;
  box-sizing: border-box;
}
.nav-thumb {
  width: 100%;
  height: 255px;
  background: #cdcdcd;
  margin: 93px 0 10px;
}
.win-files {
  flex: 1;
  position: relative;
}
.sort-caret {
  position: absolute;
  left: 201px;
  top: 1px;
}
.file-head {
  display: grid;
  grid-template-columns: 382px 160px 160px;
  height: 25px;
  padding-left: 19px;
  color: #4c607a;
  margin-bottom: 5px;
}
.file-head span {
  line-height: 25px;
}
.file-head span + span {
  border-left: 1px solid #e5e5e5;
  padding-left: 6px;
}
.file-head span:last-child {
  border-right: 1px solid #e5e5e5;
}
.file-row {
  display: grid;
  grid-template-columns: 386px 160px 160px;
  height: 21px;
  align-items: center;
  padding-left: 21px;
}
.file-name {
  display: flex;
  align-items: center;
  gap: 5px;
  white-space: nowrap;
}
.file-type {
  color: #6d6d6d;
  white-space: nowrap;
}
.win-status {
  height: 24px;
  flex: none;
  display: flex;
  align-items: center;
  color: #333;
  padding-bottom: 2px;
  box-sizing: border-box;
}
.status-count {
  margin-left: 14px;
  padding-right: 11px;
  border-right: 1px solid #f0f0f0;
  margin-right: auto;
  line-height: 20px;
}
.status-view {
  width: 22px;
  height: 23px;
  display: flex;
  align-items: center;
  justify-content: center;
  margin-right: 5px;
}
.status-view.on {
  box-sizing: border-box;
  background: #cce8f6;
  border: 1px solid #2d9fd9;
  margin-right: 0;
}
</style>
